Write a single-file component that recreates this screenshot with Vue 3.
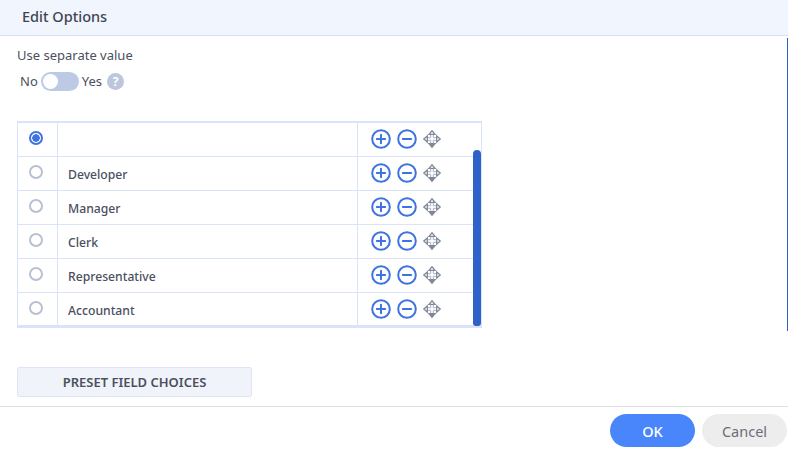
<template>
  <div class="dialog">
    <div class="header">Edit Options</div>
    <div class="body">
      <div class="label">Use separate value</div>
      <div class="toggle-row">
        <span>No</span>
        <span class="switch"><span class="knob"></span></span>
        <span>Yes</span>
        <span class="help">?</span>
      </div>
      <div class="table-wrap">
        <div v-for="(item, i) in options" :key="i" class="row">
          <div class="cell-radio">
            <span class="radio" :class="{ checked: i === 0 }"></span>
          </div>
          <div class="cell-name">{{ item }}</div>
          <div class="cell-actions">
            <svg class="icon" viewBox="0 0 20 20" width="20" height="20" fill="none" stroke="#3f74e0" stroke-width="2">
              <circle cx="10" cy="10" r="8.8" />
              <path d="M10 5.8v8.4M5.8 10h8.4" stroke-linecap="round" />
            </svg>
            <svg class="icon" viewBox="0 0 20 20" width="20" height="20" fill="none" stroke="#3f74e0" stroke-width="2">
              <circle cx="10" cy="10" r="8.8" />
              <path d="M5.8 10h8.4" stroke-linecap="round" />
            </svg>
            <svg class="icon move" viewBox="0 0 20 20" width="20" height="20" fill="none" stroke="#7f8799" stroke-width="1.3">
              <path d="M8.7 5.5v3.2H5.5M11.3 5.5v3.2h3.2M8.7 14.5v-3.2H5.5M11.3 14.5v-3.2h3.2" stroke="#a9afbe" stroke-width="1" />
              <path d="M7 5.3L10 1.8l3 3.5z" />
              <path d="M5.3 7L1.8 10l3.5 3z" />
              <path d="M14.7 7l3.5 3-3.5 3z" />
              <path d="M7 14.7l3 3.5 3-3.5z" fill="#7f8799" />
            </svg>
          </div>
        </div>
        <div class="scrollbar"></div>
      </div>
      <button class="preset">PRESET FIELD CHOICES</button>
    </div>
    <div class="footer">
      <button class="btn ok">OK</button>
      <button class="btn cancel">Cancel</button>
    </div>
    <div class="edge"></div>
  </div>
</template>

<script setup>
const options = ['', 'Developer', 'Manager', 'Clerk', 'Representative', 'Accountant']
</script>

<style>
html, body {
  margin: 0;
  background: #fff;
}
</style>

<style scoped>
.dialog {
  position: relative;
  width: 788px;
  height: 449px;
  overflow: hidden;
  background: #fff;
  font-family: "Noto Sans", sans-serif;
  color: #4a5060;
  display: flex;
  flex-direction: column;
}

.header {
  box-sizing: border-box;
  height: 36px;
  padding: 0 0 0 22px;
  background: #f1f5fe;
  border-bottom: 1px solid #d6e0f5;
  color: #3f4452;
  font-size: 14.5px;
  font-weight: 500;
  line-height: 33px;
}

.body {
  box-sizing: border-box;
  height: 370px;
  padding: 9px 0 0 17px;
}

.label {
  font-size: 13px;
  line-height: 20px;
}

.toggle-row {
  display: flex;
  align-items: center;
  gap: 3px;
  height: 22px;
  margin-top: 5px;
  padding-left: 3px;
  font-size: 13px;
}

.switch {
  position: relative;
  width: 38px;
  height: 19px;
  border-radius: 10px;
  background: #bccae6;
}

.knob {
  position: absolute;
  left: 2px;
  top: 2px;
  width: 15px;
  height: 15px;
  border-radius: 50%;
  background: #fff;
}

.help {
  width: 17px;
  height: 17px;
  margin-left: 2px;
  border-radius: 50%;
  background: #bcc6dc;
  color: #fff;
  font-size: 12px;
  font-weight: 700;
  line-height: 17px;
  text-align: center;
}

.table-wrap {
  position: relative;
  box-sizing: border-box;
  width: 465px;
  height: 207px;
  margin-top: 29px;
  border: 1px solid #d9e4fa;
  border-top-width: 2px;
  border-bottom-width: 3px;
}

.row {
  box-sizing: border-box;
  display: flex;
  height: 34px;
  border-bottom: 1px solid #d9e4fa;
}

.row:last-of-type {
  border-bottom: 0;
}

.cell-radio {
  box-sizing: border-box;
  width: 40px;
  padding: 8px 0 0 11px;
  border-right: 1px solid #d9e4fa;
}

.radio {
  display: block;
  box-sizing: border-box;
  width: 14px;
  height: 14px;
  border: 2px solid #b9c0d2;
  border-radius: 50%;
}

.radio.checked {
  border-color: #3f74e0;
  background: radial-gradient(circle, #3f74e0 0 3.5px, #fff 4px);
}

.cell-name {
  box-sizing: border-box;
  width: 300px;
  padding: 7px 0 0 10px;
  border-right: 1px solid #d9e4fa;
  color: #4a5060;
  font-size: 12.2px;
  font-weight: 500;
  line-height: 22px;
}

.cell-actions {
  display: flex;
  gap: 6px;
  padding: 6px 0 0 13px;
}

.move {
  margin-left: -1px;
}

.scrollbar {
  position: absolute;
  right: 0;
  top: 27px;
  bottom: -1px;
  width: 8px;
  border-radius: 4px 4px 3px 3px;
  background: #2f62c9;
}

.preset {
  display: block;
  box-sizing: border-box;
  width: 235px;
  height: 30px;
  margin-top: 39px;
  padding: 0;
  border: 1px solid #dde5f6;
  border-radius: 2px;
  background: #f0f3f9;
  color: #4a5060;
  font-family: inherit;
  font-size: 13px;
  font-weight: 600;
}

.footer {
  flex: 1;
  display: flex;
  gap: 7px;
  padding: 7px 0 0 610px;
  border-top: 1px solid #dfe1e5;
}

.btn {
  width: 85px;
  height: 33px;
  padding: 0;
  border: 0;
  border-radius: 17px;
  font-family: inherit;
  font-size: 14.5px;
}

.ok {
  background: #4a86fb;
  color: #fff;
  font-weight: 500;
}

.cancel {
  background: #ededed;
  color: #6a6e78;
}

.edge {
  position: absolute;
  right: 0;
  top: 38px;
  height: 293px;
  width: 1px;
  background: #2f62c9;
}
</style>
